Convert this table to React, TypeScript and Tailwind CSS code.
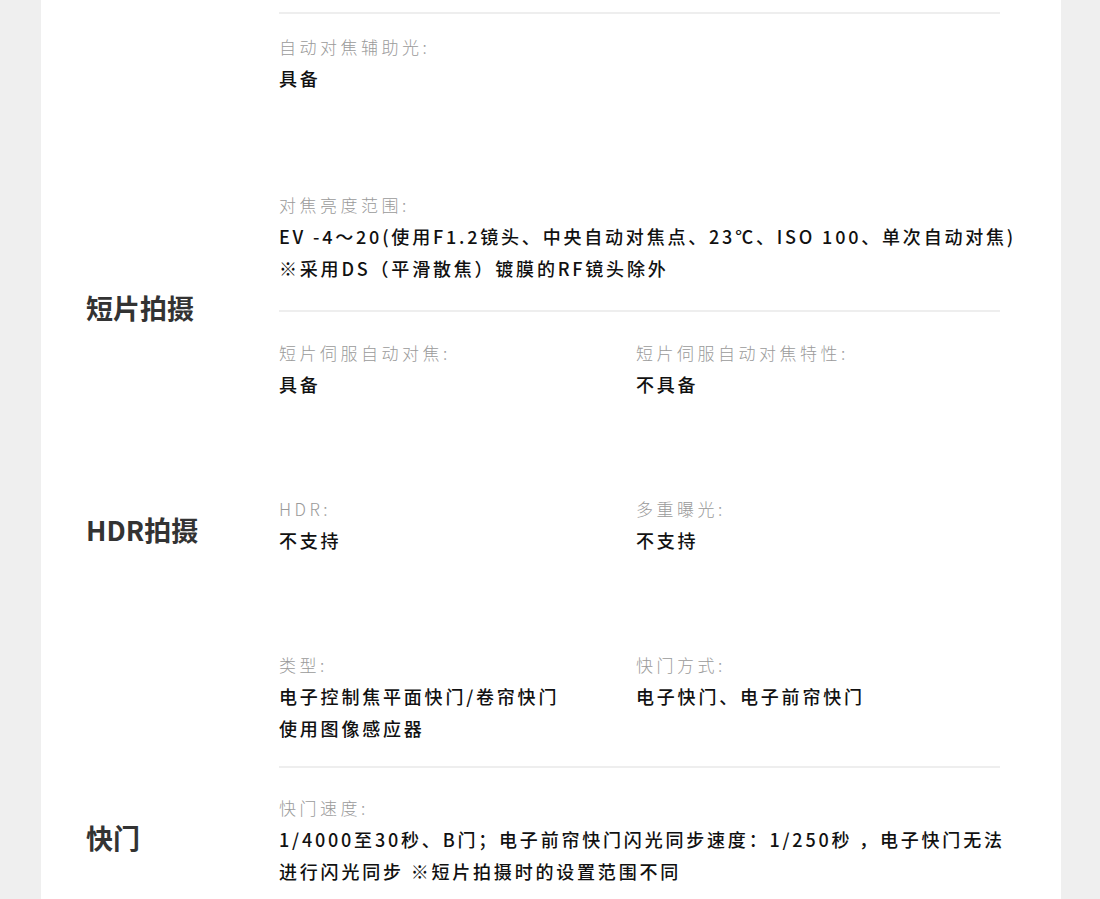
import React from 'react';

interface SpecProps {
  label: string;
  lines: string[];
}

// 规格项：灰色标题 + 粗体内容
const Spec: React.FC<SpecProps> = ({ label, lines }) => (
  <div>
    <div className="text-[17px] leading-[30px] tracking-[3.5px] font-light text-[#9a9a9a]">{label}</div>
    {lines.map((line) => (
      <div key={line} className="whitespace-nowrap text-[18px] leading-[32px] tracking-[2.8px] font-medium text-[#111]">
        {line}
      </div>
    ))}
  </div>
);

const Divider = () => <div className="h-[2px] bg-[#eeeeee]" />;

interface SectionProps {
  title?: string;
  titleClass: string;
  bodyClass: string;
  children: React.ReactNode;
}

const Section: React.FC<SectionProps> = ({ title, titleClass, bodyClass, children }) => (
  <div className="flex">
    <div className={`w-[238px] shrink-0 pl-[45px] ${titleClass}`}>
      {title && <h2 className="text-[27px] leading-[36px] font-bold text-[#333]">{title}</h2>}
    </div>
    <div className={`w-[721px] ${bodyClass}`}>{children}</div>
  </div>
);

export default function App() {
  return (
    <div className="min-h-screen bg-[#efefef] font-['Noto_Sans_CJK_SC','Noto_Sans',sans-serif]">
      <div className="ml-[41px] w-[1020px] bg-white min-h-screen">
        {/* 自动对焦（上一节末尾） */}
        <Section titleClass="" bodyClass="pt-[12px] pb-[64px]">
          <Divider />
          <div className="mt-[18px] mb-[2px]">
            <Spec label="自动对焦辅助光:" lines={['具备']} />
          </div>
        </Section>

        <Section title="短片拍摄" titleClass="pt-[130px]" bodyClass="pt-[30px] pb-[46px]">
          <Spec
            label="对焦亮度范围:"
            lines={[
              'EV -4～20(使用F1.2镜头、中央自动对焦点、23℃、ISO 100、单次自动对焦)',
              '※采用DS（平滑散焦）镀膜的RF镜头除外',
            ]}
          />
          <div className="mt-[26px]">
            <Divider />
          </div>
          <div className="mt-[26px] grid grid-cols-[357px_1fr]">
            <Spec label="短片伺服自动对焦:" lines={['具备']} />
            <Spec label="短片伺服自动对焦特性:" lines={['不具备']} />
          </div>
        </Section>

        <Section title="HDR拍摄" titleClass="pt-[66px]" bodyClass="pt-[48px] pb-[46px]">
          <div className="grid grid-cols-[357px_1fr]">
            <Spec label="HDR:" lines={['不支持']} />
            <Spec label="多重曝光:" lines={['不支持']} />
          </div>
        </Section>

        <Section title="快门" titleClass="pt-[218px]" bodyClass="pt-[48px] pb-[46px]">
          <div className="grid grid-cols-[357px_1fr]">
            <Spec label="类型:" lines={['电子控制焦平面快门/卷帘快门', '使用图像感应器']} />
            <Spec label="快门方式:" lines={['电子快门、电子前帘快门']} />
          </div>
          <div className="mt-[22px]">
            <Divider />
          </div>
          <div className="mt-[25px]">
            <Spec
              label="快门速度:"
              lines={[
                '1/4000至30秒、B门；电子前帘快门闪光同步速度：1/250秒 ，电子快门无法',
                '进行闪光同步 ※短片拍摄时的设置范围不同',
              ]}
            />
          </div>
        </Section>
      </div>
    </div>
  );
}
